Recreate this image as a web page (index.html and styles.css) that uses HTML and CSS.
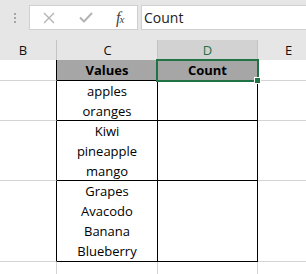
FILE: index.html
```html
<!DOCTYPE html>
<html lang="en">
<head>
    <meta charset="UTF-8">
    <title>Sheet</title>
    <link rel="stylesheet" href="styles.css">
</head>
<body>
    <div class="toolbar">
        <div class="grip"><span></span><span></span><span></span></div>
        <div class="fbox">
            <svg class="icon" width="12" height="12" viewBox="0 0 12 12">
                <path d="M1 1 L11 11 M11 1 L1 11" stroke="#b4b4b4" stroke-width="1.4" fill="none"/>
            </svg>
            <svg class="icon" width="14" height="11" viewBox="0 0 14 11">
                <path d="M1 5.5 L5 9.5 L13 1" stroke="#b4b4b4" stroke-width="2" fill="none"/>
            </svg>
            <span class="fx">f<sub>x</sub></span>
        </div>
        <div class="valuebox">Count</div>
    </div>

    <div class="sheet">
        <div class="hd hd-b">B</div>
        <div class="hd hd-c">C</div>
        <div class="hd hd-d">D</div>
        <div class="hd hd-e">E</div>

        <div class="cell b r1 edge"></div>
        <div class="cell c r1 tb head">Values</div>
        <div class="cell d r1 tb head sel">Count<span class="handle"></span></div>
        <div class="cell e r1"></div>

        <div class="cell b r2 edge"></div>
        <div class="cell c r2 tb"><span>apples</span><span>oranges</span></div>
        <div class="cell d r2 tb"></div>
        <div class="cell e r2"></div>

        <div class="cell b r3 edge"></div>
        <div class="cell c r3 tb"><span>Kiwi</span><span>pineapple</span><span>mango</span></div>
        <div class="cell d r3 tb"></div>
        <div class="cell e r3"></div>

        <div class="cell b r4 edge"></div>
        <div class="cell c r4 tb"><span>Grapes</span><span>Avacodo</span><span>Banana</span><span>Blueberry</span></div>
        <div class="cell d r4 tb"></div>
        <div class="cell e r4"></div>

        <div class="cell b r5"></div>
        <div class="cell c r5"></div>
        <div class="cell d r5"></div>
        <div class="cell e r5"></div>
    </div>
</body>
</html>
```

FILE: styles.css
```css
body {
    margin: 0;
    background-color: #ffffff;
    font-family: "Open Sans", "Liberation Sans", sans-serif;
    font-size: 13px;
    color: #000;
    overflow: hidden;
}
.toolbar {
    height: 40px;
    background-color: #e6e6e6;
    display: flex;
    align-items: flex-start;
    padding-top: 5px;
    box-sizing: border-box;
}
.grip {
    width: 29px;
    height: 25px;
    display: flex;
    flex-direction: column;
    align-items: center;
    justify-content: center;
    gap: 2px;
}
.grip span {
    width: 2px;
    height: 2px;
    background-color: #a6a6a6;
}
.fbox {
    width: 107px;
    height: 23px;
    background-color: #fff;
    border: 1px solid #d0d0d0;
    display: flex;
    align-items: center;
}
.fbox .icon:first-child {
    margin-left: 13px;
}
.fbox .icon + .icon {
    margin-left: 24px;
}
.fx {
    margin-left: 23px;
    font-family: "Liberation Serif", serif;
    font-style: italic;
    font-size: 16px;
    color: #444;
    line-height: 1;
    letter-spacing: -1px;
}
.fx sub {
    font-size: 11px;
    vertical-align: 0;
}
.valuebox {
    flex: 1;
    margin-left: 3px;
    height: 23px;
    background-color: #fff;
    border: 1px solid #d0d0d0;
    border-right: none;
    padding-left: 2px;
    line-height: 23px;
    font-size: 14px;
    color: #222;
}
.sheet {
    display: grid;
    grid-template-columns: 57px 101px 100px 1fr;
    grid-template-rows: 20px 21px 40px 60px 81px 20px;
}
.hd {
    background-color: #e6e6e6;
    text-align: center;
    line-height: 20px;
    font-size: 13px;
    color: #111;
}
.hd-b {
    padding-right: 10px;
    border-right: 1px solid #c4c4c4;
}
.hd-d {
    background-color: #d2d2d2;
    color: #217346;
    border-bottom: 1px solid #217346;
    border-left: 1px solid #c4c4c4;
    margin-left: -1px;
    border-right: 1px solid #c4c4c4;
}
.hd-e {
    text-align: left;
    padding-left: 27px;
}
.cell {
    border-bottom: 1px solid #d4d4d4;
    border-right: 1px solid #d4d4d4;
    display: flex;
    flex-direction: column;
    align-items: center;
    justify-content: center;
    line-height: 20px;
}
.cell.e {
    border-right: none;
}
.cell.edge {
    border-right-color: #000;
}
.cell.tb {
    border-right-color: #000;
    border-bottom-color: #000;
}
.cell.head {
    background-color: #a6a6a6;
    font-weight: bold;
    line-height: 19px;
}
.cell.r5 {
    border-bottom: none;
}
.sel {
    position: relative;
}
.sel::after {
    content: "";
    position: absolute;
    left: -2px;
    top: -1px;
    right: -2px;
    bottom: -2px;
    border: 2px solid #217346;
}
.handle {
    position: absolute;
    right: -4px;
    bottom: -4px;
    width: 5px;
    height: 5px;
    background-color: #217346;
    border: 1px solid #fff;
    z-index: 1;
}
```
